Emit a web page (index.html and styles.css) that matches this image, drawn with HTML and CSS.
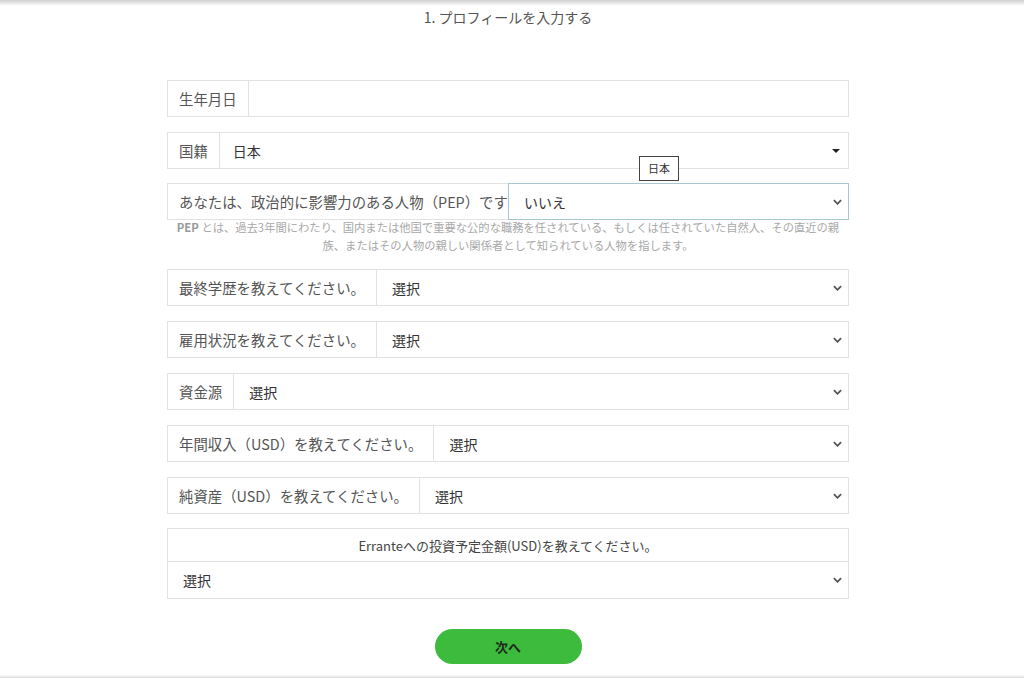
FILE: index.html
```html
<!DOCTYPE html>
<html lang="ja">
<head>
<meta charset="utf-8">
<link rel="stylesheet" href="styles.css">
</head>
<body>
<div class="topbar"></div>
<h1 class="step">1. プロフィールを入力する</h1>
<div class="wrap">
  <form class="form">
    <div class="row">
      <div class="label">生年月日</div>
      <div class="value"></div>
    </div>
    <div class="row">
      <div class="label">国籍</div>
      <div class="value">日本<svg class="tri" viewBox="0 0 8 4"><path d="M0 0h8L4 4z" /></svg></div>
      <div class="tip">日本</div>
    </div>
    <div class="row pep">
      <div class="label pep-label">あなたは、政治的に影響力のある人物（PEP）ですか？</div>
      <div class="value sel active">いいえ<svg class="chev" viewBox="0 0 10 6"><path d="M1 1l4 4 4-4" /></svg></div>
    </div>
    <p class="help"><b>PEP</b> とは、過去3年間にわたり、国内または他国で重要な公的な職務を任されている、もしくは任されていた自然人、その直近の親族、またはその人物の親しい関係者として知られている人物を指します。</p>
    <div class="row">
      <div class="label">最終学歴を教えてください。</div>
      <div class="value sel">選択<svg class="chev" viewBox="0 0 10 6"><path d="M1 1l4 4 4-4" /></svg></div>
    </div>
    <div class="row">
      <div class="label">雇用状況を教えてください。</div>
      <div class="value sel">選択<svg class="chev" viewBox="0 0 10 6"><path d="M1 1l4 4 4-4" /></svg></div>
    </div>
    <div class="row">
      <div class="label">資金源</div>
      <div class="value sel">選択<svg class="chev" viewBox="0 0 10 6"><path d="M1 1l4 4 4-4" /></svg></div>
    </div>
    <div class="row">
      <div class="label">年間収入（USD）を教えてください。</div>
      <div class="value sel">選択<svg class="chev" viewBox="0 0 10 6"><path d="M1 1l4 4 4-4" /></svg></div>
    </div>
    <div class="row">
      <div class="label">純資産（USD）を教えてください。</div>
      <div class="value sel">選択<svg class="chev" viewBox="0 0 10 6"><path d="M1 1l4 4 4-4" /></svg></div>
    </div>
    <div class="block">
      <div class="block-head">Erranteへの投資予定金額(USD)を教えてください。</div>
      <div class="value sel block-sel">選択<svg class="chev" viewBox="0 0 10 6"><path d="M1 1l4 4 4-4" /></svg></div>
    </div>
    <div class="actions">
      <button type="button" class="next">次へ</button>
    </div>
  </form>
</div>
<div class="bottombar"></div>
</body>
</html>
```

FILE: styles.css
```css
* { box-sizing: border-box; }
html, body { margin: 0; padding: 0; background: #fff; }
body {
  font-family: "Noto Sans CJK JP", "Noto Sans", sans-serif;
  color: #444;
  width: 1024px;
  height: 678px;
  overflow: hidden;
  position: relative;
}
.topbar {
  height: 6px;
  background: linear-gradient(#cfcfcf, #f2f2f2 70%, #fff);
}
.step {
  margin: 2px 0 0;
  text-align: center;
  font-size: 14px;
  font-weight: 400;
  color: #555;
  line-height: 18px;
  padding-right: 8px;
}
.wrap {
  padding-right: 8px;
  margin-top: 54px;
}
.form {
  width: 682px;
  margin: 0 auto;
}
.row {
  display: flex;
  height: 37px;
  border: 1px solid #e2e2e2;
  margin-bottom: 15px;
  position: relative;
  font-size: 14.4px;
}
.label {
  flex: 0 0 auto;
  padding: 0 11px;
  display: flex;
  align-items: center;
  border-right: 1px solid #e2e2e2;
  color: #555;
  white-space: nowrap;
}
.value {
  flex: 1 1 auto;
  display: flex;
  align-items: center;
  padding: 0 6px 0 13px;
  color: #333;
  position: relative;
  font-size: 14px;
}
.sel { padding-left: 15px; }
.tri {
  margin-left: auto;
  width: 8px;
  height: 4px;
  fill: #222;
  margin-right: 2px;
}
.chev {
  margin-left: auto;
  width: 9px;
  height: 6px;
  fill: none;
  stroke: #555;
  stroke-width: 2;
}
.tip {
  position: absolute;
  left: 471px;
  top: 23px;
  border: 1px solid #444;
  background: #fff;
  font-size: 11px;
  color: #333;
  padding: 3px 8px;
  line-height: 17px;
  z-index: 2;
}
.pep { margin-bottom: 0; margin-top: -1px; }
.pep-label {
  flex: 0 0 340px;
  overflow: hidden;
  border-right: none;
  justify-content: flex-start;
}
.active {
  border: 1px solid #a9c6d3;
  margin: -1px -1px -1px 0;
}
.help {
  margin: -2px 0 0;
  text-align: center;
  font-size: 11.3px;
  line-height: 18px;
  color: #a8a8a8;
  padding: 0 4px;
  height: 51px;
}
.help b { color: #999; }
.block {
  border: 1px solid #e2e2e2;
  margin-top: -1px;
}
.block-head {
  height: 33px;
  display: flex;
  align-items: center;
  justify-content: center;
  font-size: 13px;
  color: #444;
  border-bottom: 1px solid #e2e2e2;
}
.block-sel {
  height: 36px;
  font-size: 14px;
}
.actions {
  display: flex;
  justify-content: center;
  margin-top: 30px;
}
.next {
  width: 147px;
  height: 35px;
  border: none;
  border-radius: 18px;
  background: #3dbb3d;
  color: #1d2b1d;
  font-family: "Noto Sans CJK JP", sans-serif;
  font-weight: 700;
  font-size: 13px;
}
.bottombar {
  position: absolute;
  left: 0;
  right: 0;
  bottom: 0;
  height: 3px;
  background: linear-gradient(#fff, #d8d8d8);
}
```
